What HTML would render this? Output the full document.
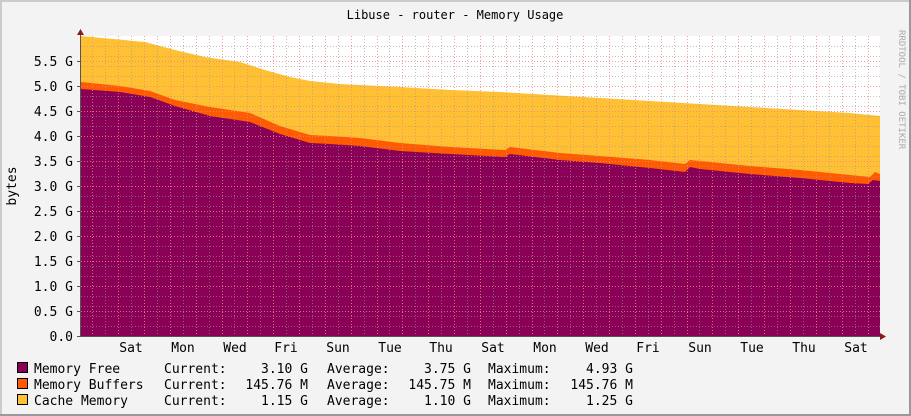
<!DOCTYPE html>
<html><head><meta charset="utf-8"><style>
html,body{margin:0;padding:0;background:#f3f3f3;}
svg{display:block;}
text{font-family:"DejaVu Sans Mono","Liberation Mono",monospace;fill:#000;}
</style></head><body>
<svg width="911" height="416" xmlns="http://www.w3.org/2000/svg">
<defs>
<clipPath id="pa"><rect x="81" y="36" width="799" height="300"/></clipPath>
</defs>
<rect x="0" y="0" width="911" height="416" fill="#f3f3f3"/>
<rect x="0" y="0" width="911" height="2" fill="#cbcbcb"/>
<rect x="0" y="0" width="2" height="416" fill="#cbcbcb"/>
<rect x="909" y="0" width="2" height="416" fill="#999"/>
<rect x="0" y="414" width="911" height="2" fill="#999"/>
<rect x="81" y="36" width="799" height="300" fill="#fff"/>
<g clip-path="url(#pa)">
<polygon fill="#ffc133" points="81,336 81,36 145,42 175,50 205,57 240,62 265,70 290,77 310,81 340,84 400,87 450,90 500,92 550,95 600,98 650,101 700,104 750,107 800,110 850,113 880,116 880,336"/>
<polygon fill="#ff5a00" points="81,336 81,82 120,86 150,91 175,100 210,107 250,113 280,126 310,135 330,136 360,138 400,143 450,147 505,150 510,147 560,153 600,156 650,160 685,164 690,160 700,161 750,166 800,170 850,175 870,177 875,172 880,174 880,336"/>
<polygon fill="#8b0057" points="81,336 81,89 120,92 150,97 175,106 210,116 250,122 280,134 310,143 330,144 360,146 400,151 450,154 505,157 510,154 560,160 600,163 650,168 685,172 690,167 700,169 750,174 800,178 850,183 868,184 873,180 880,181 880,336"/>
<g stroke="#999" stroke-width="1" stroke-dasharray="1,2" opacity="0.6">
<path d="M81 46.5H880M81 56.5H880M81 66.5H880M81 76.5H880M81 96.5H880M81 106.5H880M81 116.5H880M81 126.5H880M81 146.5H880M81 156.5H880M81 166.5H880M81 176.5H880M81 196.5H880M81 206.5H880M81 216.5H880M81 226.5H880M81 246.5H880M81 256.5H880M81 266.5H880M81 276.5H880M81 296.5H880M81 306.5H880M81 316.5H880M81 326.5H880"/>
<path d="M105.5 36V336M131.5 36V336M157.5 36V336M183.5 36V336M209.5 36V336M234.5 36V336M260.5 36V336M286.5 36V336M312.5 36V336M338.5 36V336M364.5 36V336M389.5 36V336M415.5 36V336M441.5 36V336M467.5 36V336M493.5 36V336M519.5 36V336M544.5 36V336M570.5 36V336M596.5 36V336M622.5 36V336M648.5 36V336M674.5 36V336M699.5 36V336M725.5 36V336M751.5 36V336M777.5 36V336M803.5 36V336M829.5 36V336M855.5 36V336"/>
</g>
<g stroke="#e88" stroke-width="1" stroke-dasharray="1,2" opacity="0.8">
<path d="M81 61.5H880M81 86.5H880M81 111.5H880M81 136.5H880M81 161.5H880M81 186.5H880M81 211.5H880M81 236.5H880M81 261.5H880M81 286.5H880M81 311.5H880"/>
<path d="M92.5 36V336M118.5 36V336M144.5 36V336M170.5 36V336M196.5 36V336M222.5 36V336M247.5 36V336M273.5 36V336M299.5 36V336M325.5 36V336M351.5 36V336M377.5 36V336M402.5 36V336M428.5 36V336M454.5 36V336M480.5 36V336M506.5 36V336M532.5 36V336M557.5 36V336M583.5 36V336M609.5 36V336M635.5 36V336M661.5 36V336M687.5 36V336M712.5 36V336M738.5 36V336M764.5 36V336M790.5 36V336M816.5 36V336M842.5 36V336M868.5 36V336"/>
</g>
</g>
<path d="M80.5 31V336.5H884" stroke="#555" stroke-width="1" fill="none"/>
<polygon points="77,35 84,35 80.5,29" fill="#8b1a1a"/>
<polygon points="880,333 880,340 886,336.5" fill="#8b1a1a"/>
<g stroke="#555"><path d="M77 336.5H81M77 311.5H81M77 286.5H81M77 261.5H81M77 236.5H81M77 211.5H81M77 186.5H81M77 161.5H81M77 136.5H81M77 111.5H81M77 86.5H81M77 61.5H81"/></g>
<text x="455" y="19" font-size="12" text-anchor="middle">Libuse - router - Memory Usage</text>
<g font-size="13" text-anchor="end">
<text x="73" y="341">0.0</text>
<text x="73" y="316">0.5 G</text>
<text x="73" y="291">1.0 G</text>
<text x="73" y="266">1.5 G</text>
<text x="73" y="241">2.0 G</text>
<text x="73" y="216">2.5 G</text>
<text x="73" y="191">3.0 G</text>
<text x="73" y="166">3.5 G</text>
<text x="73" y="141">4.0 G</text>
<text x="73" y="116">4.5 G</text>
<text x="73" y="91">5.0 G</text>
<text x="73" y="66">5.5 G</text>
</g>
<text transform="translate(16,186) rotate(-90)" font-size="13" text-anchor="middle">bytes</text>
<g font-size="13" text-anchor="middle">
<text x="131" y="352">Sat</text><text x="183" y="352">Mon</text><text x="235" y="352">Wed</text><text x="286" y="352">Fri</text>
<text x="338" y="352">Sun</text><text x="390" y="352">Tue</text><text x="441" y="352">Thu</text><text x="493" y="352">Sat</text>
<text x="545" y="352">Mon</text><text x="597" y="352">Wed</text><text x="648" y="352">Fri</text><text x="700" y="352">Sun</text>
<text x="752" y="352">Tue</text><text x="804" y="352">Thu</text><text x="856" y="352">Sat</text>
</g>
<text transform="translate(899,30) rotate(90)" font-size="9" fill="#aaa" style="fill:#aaa">RRDTOOL / TOBI OETIKER</text>
<rect x="17.5" y="362.5" width="10" height="10" fill="#8b0057" stroke="#000"/>
<rect x="17.5" y="378.5" width="10" height="10" fill="#ff5a00" stroke="#000"/>
<rect x="17.5" y="394.5" width="10" height="10" fill="#ffc133" stroke="#000"/>
<g font-size="13">
<text x="34" y="373">Memory Free</text><text x="34" y="389">Memory Buffers</text><text x="34" y="405">Cache Memory</text>
<text x="164" y="373">Current:</text><text x="164" y="389">Current:</text><text x="164" y="405">Current:</text>
<text x="327" y="373">Average:</text><text x="327" y="389">Average:</text><text x="327" y="405">Average:</text>
<text x="488" y="373">Maximum:</text><text x="488" y="389">Maximum:</text><text x="488" y="405">Maximum:</text>
</g>
<g font-size="13" text-anchor="end">
<text x="308" y="373">3.10 G</text><text x="308" y="389">145.76 M</text><text x="308" y="405">1.15 G</text>
<text x="471" y="373">3.75 G</text><text x="471" y="389">145.75 M</text><text x="471" y="405">1.10 G</text>
<text x="633" y="373">4.93 G</text><text x="633" y="389">145.76 M</text><text x="633" y="405">1.25 G</text>
</g>
</svg>
</body></html>
